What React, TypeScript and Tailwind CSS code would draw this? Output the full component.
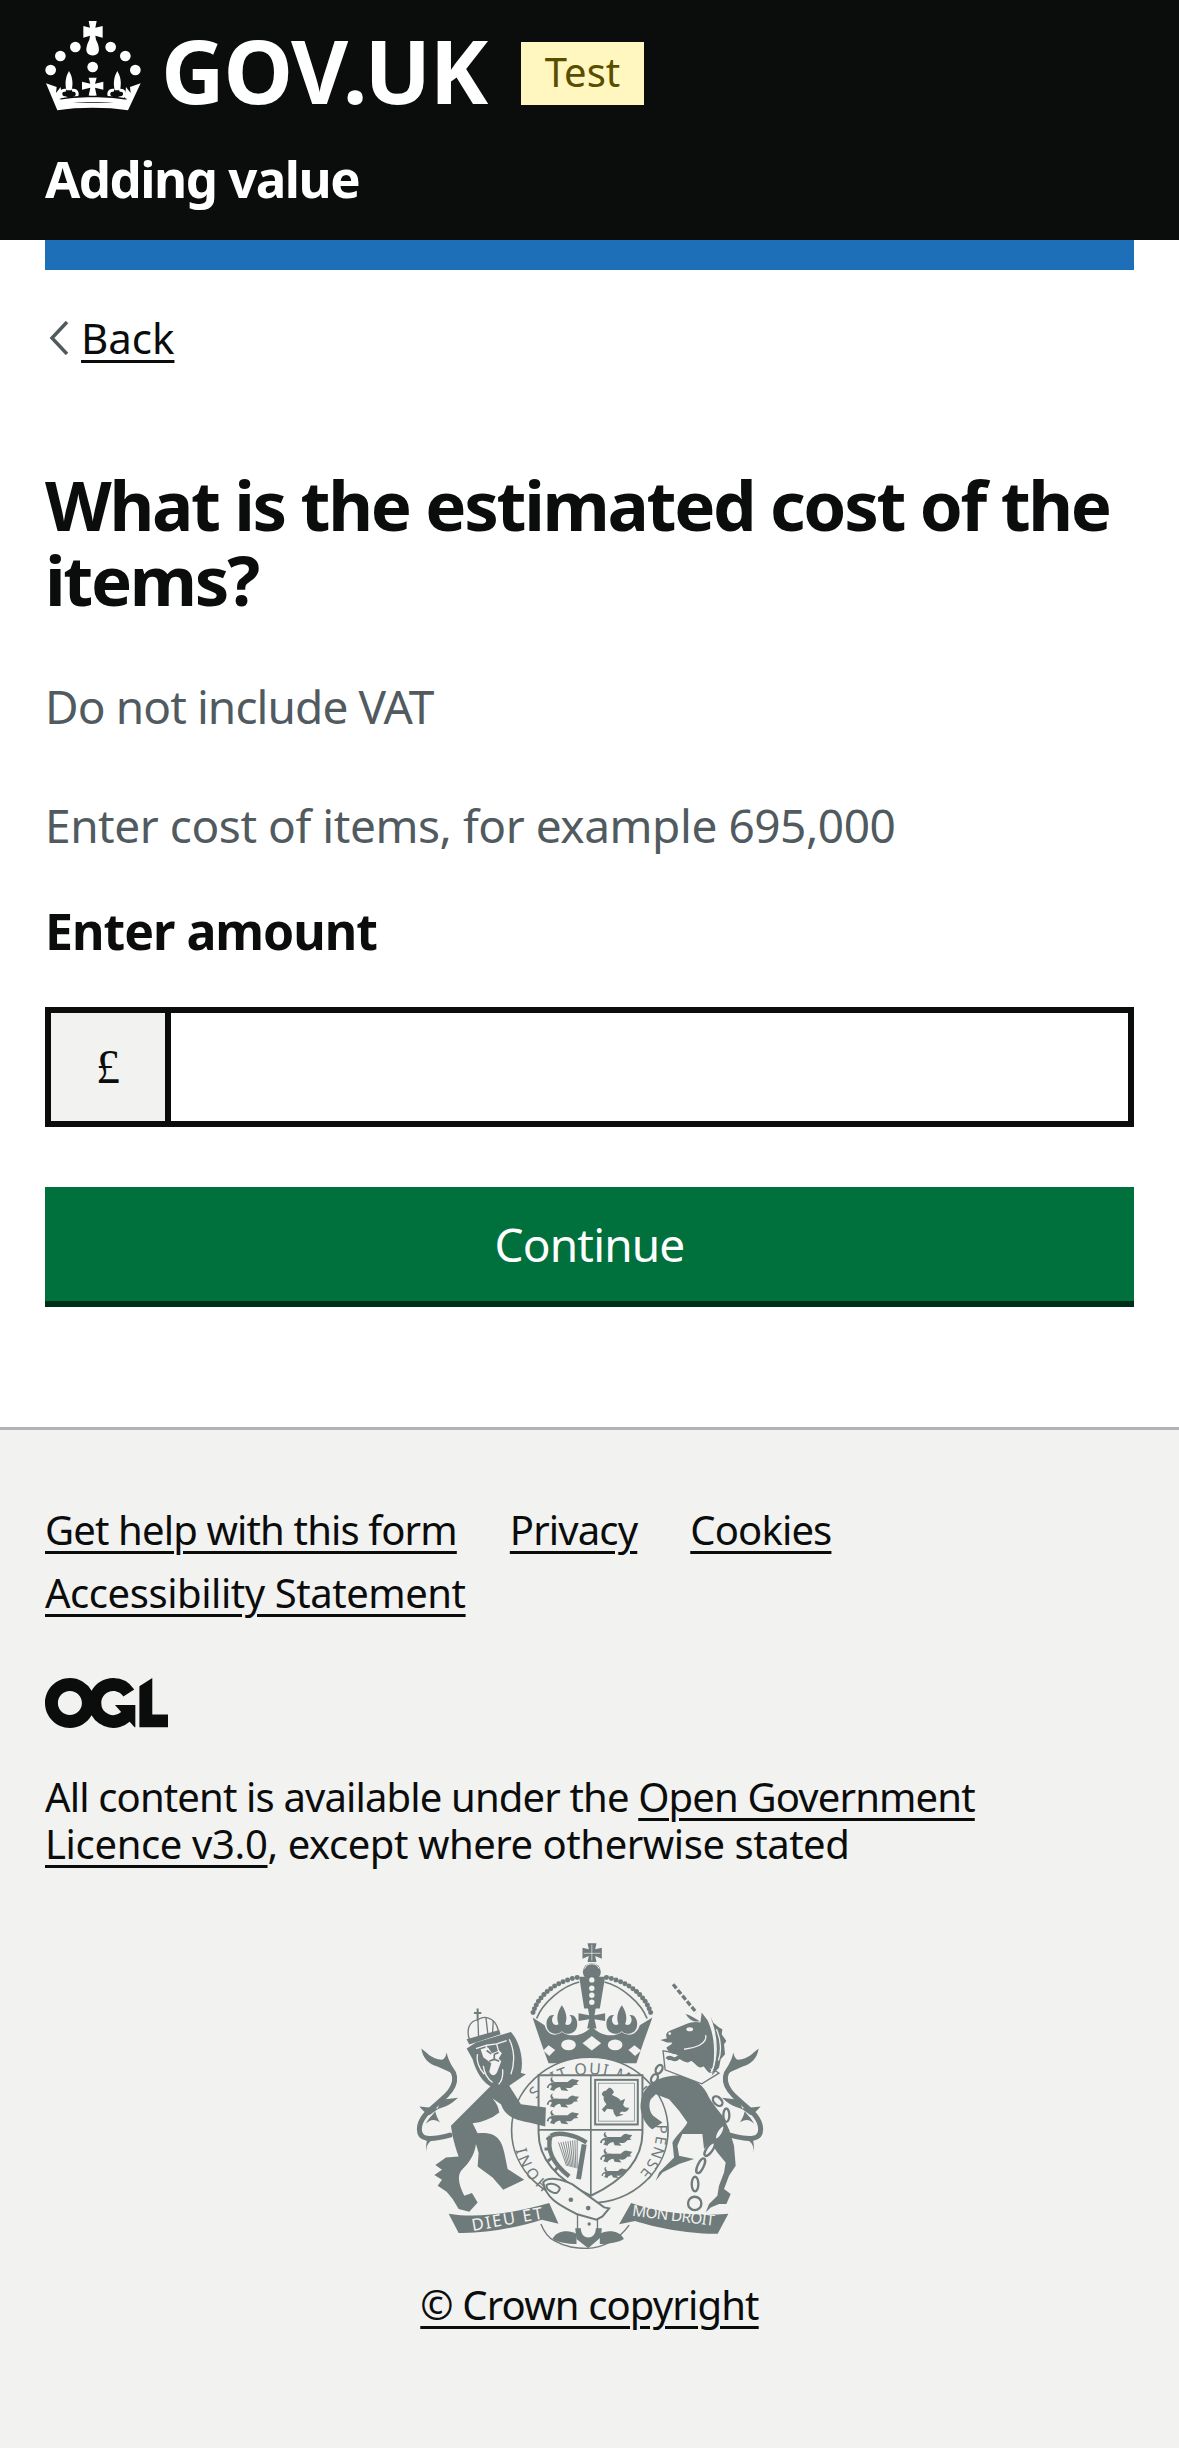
import React from "react";

const ink = "#6f7a7b";
const paper = "#f2f2f0";

function Crown() {
  const dots: [number, number][] = [
    [106, 96], [212, 96], [61, 123], [256, 123], [32, 165], [286, 165], [158, 156],
  ];
  const fleur = (x: number) =>
    `M${x} 168C${x + 10} 185 ${x + 13} 203 ${x + 8} 226H${x - 8}C${x - 13} 203 ${x - 10} 185 ${x} 168Z`;
  return (
    <svg viewBox="15 15 288 276" className="w-[96px] h-[92px] shrink-0" fill="#fff">
      <path d="M146 18H170L166 38 188 33V68L166 62 168 74C176 90 180 104 174 114 168 124 148 124 142 114 136 104 140 90 148 74L150 62 130 68V33L150 38Z" />
      {dots.map(([x, y], i) => (
        <circle key={i} cx={x} cy={y} r="16" />
      ))}
      <path d={fleur(87)} />
      <path d={fleur(232)} />
      <path d="M146 188H170L165 206 190 200V224L165 218 170 242H146L151 218 126 224V200L151 206Z" />
      <path d="M18 205 50 216 48 234 62 216 66 256 254 256 258 216 272 234 270 216 302 205 264 286C200 276 116 276 52 286Z" />
      <g fill="none" stroke="#fff" strokeWidth="9">
        <path d="M78 226C60 222 56 246 74 248 100 262 142 262 158 240 174 262 216 262 242 248 260 246 256 222 238 226" />
        <path d="M96 226C114 222 118 246 100 250M222 226C204 222 200 246 218 250" />
      </g>
      <path d="M58 252C90 268 230 268 262 252L256 250C220 240 100 240 64 250Z" fill="#0b0c0c" />
      <path d="M54 256C100 244 216 244 264 256L270 262H46Z" />
    </svg>
  );
}

function Ogl() {
  return (
    <svg viewBox="0 0 483.2 195.7" className="w-[123px] h-[50px] block" fill="#0b0c0c">
      <path d="M421.5 142.8V.1l-50.7 32.3v161.1h112.4v-50.7zm-122.3-9.6A47.12 47.12 0 0 1 221 97.8c0-26 21.1-47.1 47.1-47.1 16.7 0 31.4 8.7 39.7 21.8l42.7-27.2A97.63 97.63 0 0 0 268.1 0c-36.5 0-68.3 20.1-85.1 49.7A98 98 0 0 0 97.8 0C43.9 0 0 43.9 0 97.8s43.9 97.8 97.8 97.8c36.5 0 68.3-20.1 85.1-49.7a97.76 97.76 0 0 0 149.6 25.4l19.4 22.2h3v-87.8h-80l24.3 27.5zM97.8 145c-26 0-47.1-21.1-47.1-47.1s21.1-47.1 47.1-47.1 47.2 21 47.2 47S123.8 145 97.8 145" />
    </svg>
  );
}

function Fleur({ x }: { x: number }) {
  return (
    <path
      transform={`translate(${x} 0)`}
      d="M0 198C12 215 18 235 10 255 30 265 35 235 23 228 36 225 48 238 46 258 44 285 13 290 0 276-13 290-44 285-46 258-48 238-36 225-23 228-35 235-30 265-10 255-18 235-12 215 0 198Z"
    />
  );
}

function Passant({ x, y, s = 1 }: { x: number; y: number; s?: number }) {
  return (
    <g transform={`translate(${x} ${y}) scale(${s})`}>
      <path d="M-52 6C-50-6-36-14-16-12L14-12C24-22 30-24 36-20L50-18 42-8 48-4 34-2C28 8 18 8 8 6L16 16-6 14-10 4C-20 6-28 10-28 16L-42 12C-34 2-36-2-40-2-44-2-46 2-46 8Z" />
      <path d="M-36-10C-44-20-40-28-32-28-38-24-34-18-28-14Z" />
    </g>
  );
}

function Mantling() {
  return (
    <g transform="translate(90 330)">
      <g fill="none" stroke={ink} strokeWidth="15" strokeLinecap="round">
        <path d="M100 100C142 122 150 160 110 200 80 230 30 258 30 300 30 332 60 335 122 318" />
      </g>
      <path d="M36 58C50 68 66 90 98 92 106 90 110 80 112 70 118 100 132 110 136 135L84 112C60 106 40 88 36 58Z" />
      <path d="M96 212 146 206C128 224 108 234 84 240Z" />
      <path d="M30 232 88 238 60 258C50 254 40 244 30 232Z" />
      <path d="M54 372C48 348 56 336 90 322L56 326C50 340 48 356 54 372Z" />
      <path d="M50 284C62 268 80 270 92 280 82 262 80 256 78 246 66 262 56 268 50 284Z" />
    </g>
  );
}

function Link3({ x, y, rx, ry, r }: { x: number; y: number; rx: number; ry: number; r: number }) {
  return <ellipse cx={x} cy={y} rx={rx} ry={ry} transform={`rotate(${r} ${x} ${y})`} fill={paper} stroke={ink} strokeWidth="7" />;
}

function Crest() {
  const arc = (cx: number, cy: number, rx: number, ry: number, a0: number, a1: number, n: number) =>
    Array.from({ length: n }, (_, i) => {
      const a = ((a0 + ((a1 - a0) * i) / (n - 1)) * Math.PI) / 180;
      return [cx + rx * Math.cos(a), cy + ry * Math.sin(a)];
    });
  const dots = [...arc(218, 255, 182, 145, 194, 256, 14), ...arc(218, 255, 182, 145, 284, 346, 14)];
  const sans = { fontFamily: '"Noto Sans", sans-serif' } as const;
  return (
    <svg viewBox="105 65 1055 925" className="w-[352px] h-[308px] block" fill={ink}>
      {/* big crown */}
      <g transform="translate(420 60)">
        <path d="M205 12H232L228 30 248 25V58L228 50 232 68H205L209 50 190 58V25L209 30Z" />
        <path d="M218 16V64M194 42H244" stroke={paper} strokeWidth="2" fill="none" />
        <circle cx="218" cy="98" r="27" />
        <path d="M196 88A24 24 0 0 1 240 88" stroke={paper} strokeWidth="3" fill="none" />
        <path d="M180 112H258L242 208H195Z" />
        {[122, 147, 168, 189].map((y) => (
          <circle key={y} cx="218" cy={y} r="8" fill={paper} />
        ))}
        {dots.map(([x, y], i) => (
          <circle key={i} cx={x} cy={y} r="7.5" />
        ))}
        <path d="M52 238C70 190 130 140 180 128M384 238C366 190 306 140 256 128" stroke={ink} strokeWidth="5" fill="none" />
        <Fleur x={128} />
        <Fleur x={308} />
        <path d="M206 205H230L226 228 258 222V245L226 240 232 268H204L210 240 178 245V222L210 228Z" />
        <path d="M40 235 76 258C85 290 110 292 128 278 150 295 192 292 218 262 244 292 286 295 308 278 326 292 352 290 362 258L400 235 372 312 352 372H88L66 312Z" />
        <ellipse cx="148" cy="317" rx="22" ry="16" fill={paper} />
        <ellipse cx="288" cy="317" rx="22" ry="16" fill={paper} />
        <path d="M218 290 246 312 218 334 190 312Z" fill={paper} />
        <path d="M88 318 108 332 90 350 72 334Z" fill={paper} />
        <path d="M346 318 366 334 348 350 328 332Z" fill={paper} />
      </g>
      {/* garter ring */}
      <ellipse cx="632" cy="633" rx="235" ry="219" fill={paper} stroke={ink} strokeWidth="5" />
      <path id="gt" d="M440 633A192 168 0 0 1 824 633" fill="none" />
      <path id="gb" d="M520 800A197 197 0 0 1 436 625" fill="none" />
      <path id="gc" d="M829 600A197 197 0 0 1 705 815" fill="none" />
      <text fontSize="48" style={sans} letterSpacing="4" textAnchor="middle">
        <textPath href="#gt" startOffset="50%">
          SOIT QUI MAL
        </textPath>
      </text>
      <text fontSize="46" style={sans} letterSpacing="5">
        <textPath href="#gb" startOffset="4%">
          HONI
        </textPath>
      </text>
      <text fontSize="46" style={sans} letterSpacing="5">
        <textPath href="#gc" startOffset="6%">
          PENSE
        </textPath>
      </text>
      {/* shield */}
      <path d="M478 468H790V640C790 730 720 790 635 830 550 790 478 730 478 640Z" fill={paper} stroke={ink} strokeWidth="6" />
      <path d="M635 468V830M478 632H790" stroke={ink} strokeWidth="5" fill="none" />
      <Passant x={552} y={500} s={0.95} />
      <Passant x={552} y={550} s={0.95} />
      <Passant x={552} y={600} s={0.95} />
      <Passant x={712} y={665} s={0.95} />
      <Passant x={712} y={715} s={0.95} />
      <Passant x={706} y={765} s={0.75} />
      <rect x="648" y="482" width="128" height="134" fill="none" stroke={ink} strokeWidth="6" />
      <rect x="658" y="492" width="108" height="114" fill="none" stroke={ink} strokeWidth="2" />
      <path d="M690 505c8 2 14 8 14 16l-6 6c10 6 22 8 26 18l14-6-6 18c4 8 10 10 18 8-2 10-10 16-22 12l-8 6 14 4-22 6c-6-6-10-14-10-22l-18-2-8 10-8-8 14-16c-8-8-10-16-8-22l-6-6c0-8 6-12 12-12z" />
      {/* harp and base, crop space of the lower detail */}
      <g transform="translate(330 540)">
        <g fill="none" stroke={ink}>
          <path d="M184 110C210 96 258 108 292 130" strokeWidth="13" />
          <path d="M184 110C172 150 190 192 240 232" strokeWidth="13" />
          <path d="M285 136 268 240" strokeWidth="15" />
          <path d="M172 116 182 124M166 150 178 150M176 186 186 178M196 216 204 206" strokeWidth="9" />
          <g strokeWidth="2.5">
            {[0, 1, 2, 3, 4, 5, 6, 7, 8].map((i) => (
              <path key={i} d={`M${208 + i * 7} ${130 - i} L${232 + i * 4} ${200 + i * 1}`} />
            ))}
          </g>
        </g>
        <path d="M162 250C175 232 215 238 250 256L345 325 360 328 340 352 322 362 262 345C215 320 170 300 162 250Z" fill={paper} stroke={ink} strokeWidth="6" />
        <path d="M172 258C185 250 205 255 212 268 210 280 200 285 190 280 178 275 170 268 172 258Z" fill={paper} stroke={ink} strokeWidth="6" />
        <circle cx="245" cy="302" r="7" />
        <circle cx="297" cy="327" r="7" />
        <circle cx="300" cy="375" r="5" />
        <path d="M265 345V390M325 360V390M155 375C165 400 175 415 195 425 230 445 260 448 295 448 340 448 390 420 420 378" stroke={ink} strokeWidth="4" fill="none" />
        <path d="M190 420C200 395 240 390 262 405L262 435C235 435 205 430 190 420Z" />
        <path d="M404 420C394 395 354 390 332 405L332 435C359 435 389 430 404 420Z" />
        <path d="M258 388H275C275 425 320 425 320 388H338L335 415 297 448 262 420Z" />
      </g>
      {/* lion */}
      <path
        transform="translate(90 330)"
        d="M245 170 125 290C130 330 140 360 148 382L110 385 78 408 98 422 75 438 98 452 85 470 112 488 130 510 148 540 180 548 205 520 188 492 165 500C150 470 140 440 160 420 180 400 195 380 200 345L208 372 205 412 250 445 282 482 345 452 295 420 285 370C275 320 250 308 205 312L190 282C215 280 245 270 270 250 268 235 262 222 250 208L275 225C290 265 320 272 360 280L408 292 410 235 335 225 300 170 350 135 330 130 270 165Z"
      />
      <g transform="translate(90 330)">
        <path d="M172 58 200 40 305 8C330 35 345 90 335 130 320 165 280 180 240 170 210 150 195 110 190 90Z" />
        <g fill="none" stroke={paper} strokeWidth="4">
          <path d="M300 30C315 60 318 100 305 135M280 120C282 140 278 155 268 165M222 110C225 130 235 150 250 160M205 75C200 95 210 120 225 135" />
          <path d="M200 58 232 48 262 44 292 34M232 48 226 76M262 44 270 74" />
        </g>
        <path d="M214 60 236 54 248 72 270 64 278 72 268 88 276 96 264 128C258 142 246 142 240 128L246 102 232 92 222 84Z" fill={paper} />
        <path d="M232 64l14 10M268 70l-14 6M255 76v18M240 96l15-6 15 6" stroke={ink} strokeWidth="5" fill="none" />
      </g>
      <g fill="none" stroke={ink} strokeWidth="4">
        <path d="M272 366C258 330 272 304 296 302 304 292 346 284 358 336" />
        <path d="M296 302 298 358M320 296 326 346M342 304 340 340" />
      </g>
      <path d="M262 360 360 332 364 345 270 376Z" />
      <path d="M295 268V302M284 281H306" stroke={ink} strokeWidth="6" fill="none" />
      {/* unicorn */}
      <g transform="translate(780 180)">
        <path d="M20 330C40 300 90 285 130 290 170 300 195 320 210 355 228 385 240 395 250 410 262 430 268 450 270 450L285 500 290 560 270 590 255 630 275 645 262 675 240 675 215 685 200 700 210 675 235 650 240 620 255 580 260 550 235 520 215 490 195 510 190 465 130 465 115 500 120 530 165 540 120 555 70 580 50 605 60 580 105 535 100 490C110 470 135 450 145 430L120 395 90 360 50 345 35 360C28 375 30 395 42 410L70 430 40 450C20 440 0 400 5 370 8 350 12 340 20 330Z" />
        <path d="M72 215 78 272 188 314 240 282 210 262 110 222Z" fill={paper} stroke={ink} strokeWidth="4" />
        <path d="M64 182 84 177C78 168 82 158 94 154L140 135C156 128 172 126 184 130L188 100 206 124C222 160 230 200 222 268L130 236 110 225C95 225 85 215 82 205L96 196 100 190 84 190Z" />
        <path d="M84 240C94 226 104 250 116 236 124 226 140 254 152 240 165 232 178 268 190 256 198 248 210 282 218 274" stroke={ink} strokeWidth="12" fill="none" />
        <path d="M215 112 222 130 240 145 250 150 248 165 262 185 255 195 258 225 245 240 240 265 218 290C232 250 238 190 215 112Z" />
        <path d="M218 130C236 180 236 240 216 280M232 150C246 180 248 220 238 244" stroke={paper} strokeWidth="4" fill="none" />
        <ellipse cx="152" cy="150" rx="10" ry="6" fill={paper} />
        <circle cx="92" cy="163" r="4" fill={paper} />
        <path d="M200 168C205 195 170 205 135 210" stroke={paper} strokeWidth="4" fill="none" />
        <path d="M102 15 172 100" stroke={ink} strokeWidth="10" strokeDasharray="16 6" fill="none" />
        <path d="M140 104C155 108 170 118 182 126 165 130 150 122 140 104Z" />
        <Link3 x={60} y={270} rx={9} ry={14} r={30} />
        <Link3 x={46} y={298} rx={9} ry={14} r={30} />
        <Link3 x={236} y={366} rx={11} ry={17} r={-45} />
        <Link3 x={262} y={408} rx={9} ry={20} r={0} />
        <Link3 x={242} y={460} rx={9} ry={24} r={30} />
        <Link3 x={212} y={510} rx={9} ry={24} r={35} />
        <Link3 x={185} y={560} rx={9} ry={24} r={25} />
        <Link3 x={168} y={615} rx={10} ry={22} r={0} />
        <circle cx="167" cy="673" r="20" fill="none" stroke={ink} strokeWidth="7" />
      </g>
      <Mantling />
      <g transform="translate(1265 0) scale(-1 1)">
        <Mantling />
      </g>
      {/* ribbons */}
      <path d="M208 884C300 900 410 880 510 852L538 914 488 902C410 926 320 944 238 942Z" />
      <path d="M756 852C840 882 950 892 1048 884L1016 944C930 946 830 926 768 906L720 916Z" />
      <text x="0" y="0" fontSize="50" fill={paper} style={sans} transform="translate(280 936) rotate(-10)" textLength="215">
        DIEU ET
      </text>
      <text x="0" y="0" fontSize="46" fill={paper} style={sans} transform="translate(758 890) rotate(7)" textLength="248">
        MON DROIT
      </text>
    </svg>
  );
}

function Link({ children }: { children: React.ReactNode }) {
  return <a className="underline decoration-[3px] underline-offset-[6px] text-[#0b0c0c]">{children}</a>;
}

export default function App() {
  return (
    <div className="w-[1179px] min-h-[2448px] bg-white text-[#0b0c0c] font-['Noto_Sans',sans-serif] flex flex-col">
      <header className="h-[240px] bg-[#0b0c0c] text-white px-[45px] pt-[20px] shrink-0">
        <div className="flex items-start h-[92px]">
          <Crown />
          <span className="ml-[20px] mt-[6px] text-[88px] leading-[88px] font-bold tracking-[-1.2px]">GOV.UK</span>
          <span className="ml-[34px] mt-[22px] w-[123px] h-[63px] bg-[#fff7bf] text-[#594d00] text-[40px] leading-[60px] text-center">Test</span>
        </div>
        <div className="mt-[36px] text-[51px] leading-[60px] font-bold tracking-[-1.5px]">Adding value</div>
      </header>
      <div className="px-[45px] flex flex-col shrink-0">
        <div className="h-[30px] bg-[#1d70b8]" />
        <div className="mt-[43px] h-[50px] flex items-center">
          <svg viewBox="0 0 20 34" className="w-[20px] h-[34px] ml-[4px]" fill="none" stroke="#505a5f" strokeWidth="3.5">
            <path d="M18 1 3 17 18 33" />
          </svg>
          <span className="ml-[12px] text-[42px] leading-[50px]">
            <Link>Back</Link>
          </span>
        </div>
        <h1 className="mt-[104px] text-[69px] leading-[75px] font-bold tracking-[-2.3px]">What is the estimated cost of the items?</h1>
        <p className="mt-[59px] text-[46px] tracking-[-0.9px] leading-[60px] text-[#505a5f]">Do not include VAT</p>
        <p className="mt-[59px] text-[46px] tracking-[-0.45px] leading-[60px] text-[#505a5f]">Enter cost of items, for example 695,000</p>
        <label className="mt-[46px] text-[50px] leading-[60px] font-bold tracking-[-1px] block">Enter amount</label>
        <div className="mt-[46px] h-[120px] flex border-[6px] border-[#0b0c0c]">
          <div className="w-[120px] bg-[#f2f2f0] border-r-[6px] border-[#0b0c0c] flex items-center justify-center text-[48px] font-['Liberation_Serif',serif]">£</div>
          <input className="flex-1 min-w-0 bg-white outline-none" />
        </div>
        <button className="mt-[60px] h-[120px] bg-[#00703c] text-white text-[46px] tracking-[-0.85px] border-b-[6px] border-[#002d18] flex items-center justify-center">Continue</button>
      </div>
      <footer className="mt-[120px] flex-1 bg-[#f2f2f0] border-t-[3px] border-[#b1b4b6] px-[45px] pt-[68px] text-[40px] tracking-[-0.85px]">
        <div className="flex flex-wrap gap-x-[53px] leading-[63px]">
          <Link>Get help with this form</Link>
          <Link>Privacy</Link>
          <Link>Cookies</Link>
          <span className="tracking-[-0.45px]">
            <Link>Accessibility Statement</Link>
          </span>
        </div>
        <div className="mt-[54px]">
          <Ogl />
        </div>
        <p className="mt-[45px] leading-[47px] max-w-[960px]">
          All content is available under the{" "}
          <Link>
            Open Government <span className="tracking-[-0.35px]">Licence v3.0</span>
          </Link>
          <span className="tracking-[-0.45px]">, except where otherwise stated</span>
        </p>
        <div className="mt-[74px] flex flex-col items-center">
          <Crest />
          <div className="mt-[31px] leading-[50px]">
            <Link>© Crown copyright</Link>
          </div>
        </div>
      </footer>
    </div>
  );
}
